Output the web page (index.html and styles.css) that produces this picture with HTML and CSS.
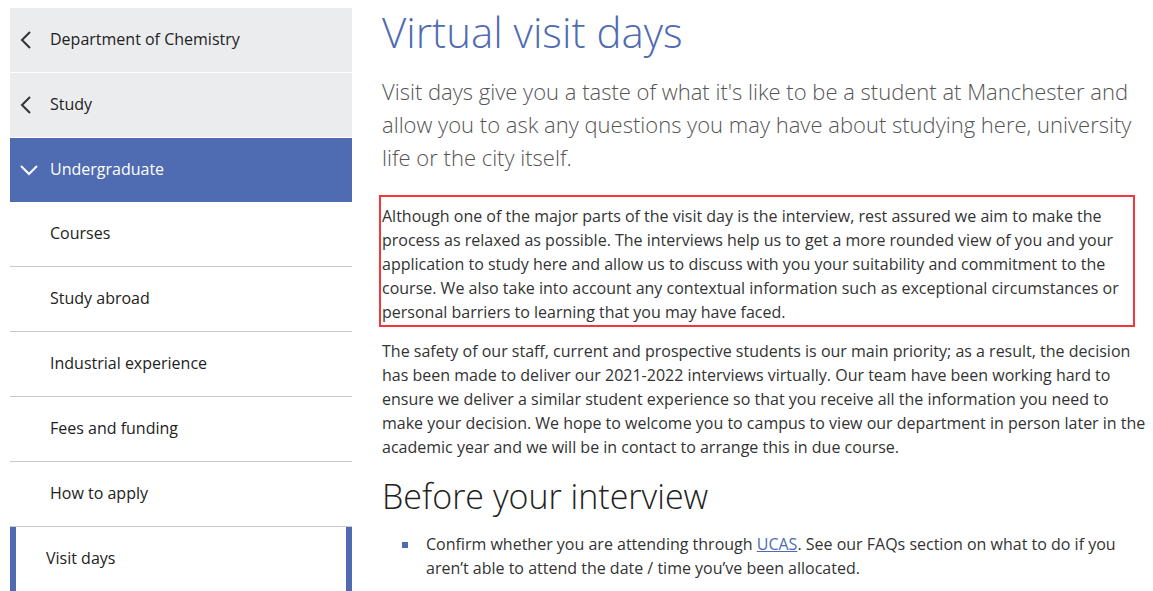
FILE: index.html
```html
<!DOCTYPE html>
<html lang="en">
<head>
<meta charset="utf-8">
<link rel="stylesheet" href="styles.css">
</head>
<body>
<div class="page">
  <nav class="side">
    <a class="item parent"><svg class="chev" width="12" height="18" viewBox="0 0 12 18"><path d="M10 1 L2 9 L10 17" fill="none" stroke="#333" stroke-width="2"/></svg>Department of Chemistry</a>
    <a class="item parent"><svg class="chev" width="12" height="18" viewBox="0 0 12 18"><path d="M10 1 L2 9 L10 17" fill="none" stroke="#333" stroke-width="2"/></svg>Study</a>
    <a class="item current"><svg class="chev down" width="18" height="12" viewBox="0 0 18 12"><path d="M1 2 L9 10 L17 2" fill="none" stroke="#fff" stroke-width="2"/></svg>Undergraduate</a>
    <a class="item child">Courses</a>
    <a class="item child">Study abroad</a>
    <a class="item child">Industrial experience</a>
    <a class="item child">Fees and funding</a>
    <a class="item child">How to apply</a>
    <a class="item child active">Visit days</a>
  </nav>
  <main class="content">
    <h1>Virtual visit days</h1>
    <p class="lead">Visit days give you a taste of what it's like to be a student at Manchester and allow you to ask any questions you may have about studying here, university life or the city itself.</p>
    <p class="boxed">Although one of the major parts of the visit day is the interview, rest assured we aim to make the process as relaxed as possible. The interviews help us to get a more rounded view of you and your application to study here and allow us to discuss with you your suitability and commitment to the course. We also take into account any contextual information such as exceptional circumstances or personal barriers to learning that you may have faced.</p>
    <p class="body">The safety of our staff, current and prospective students is our main priority; as a result, the decision has been made to deliver our 2021-2022 interviews virtually. Our team have been working hard to ensure we deliver a similar student experience so that you receive all the information you need to make your decision. We hope to welcome you to campus to view our department in person later in the academic year and we will be in contact to arrange this in due course.</p>
    <h2>Before your interview</h2>
    <ul class="list">
      <li>Confirm whether you are attending through <a href="#">UCAS</a>. See our FAQs section on what to do if you aren’t able to attend the date / time you’ve been allocated.</li>
    </ul>
  </main>
</div>
</body>
</html>
```
FILE: styles.css
```css
html, body {
  margin: 0;
  padding: 0;
  background: #fff;
}
body {
  font-family: "Open Sans", "Liberation Sans", sans-serif;
  color: #333;
  overflow: hidden;
  height: 591px;
}
.page {
  display: flex;
  padding: 8px 0 0 10px;
  gap: 30px;
}
.side {
  width: 342px;
  flex: none;
  display: flex;
  flex-direction: column;
}
.item {
  display: flex;
  align-items: center;
  height: 64px;
  padding-left: 40px;
  padding-bottom: 3px;
  box-sizing: border-box;
  font-size: 16px;
  color: #222;
  border-bottom: 1px solid #c8c8c8;
  position: relative;
}
.item.parent {
  height: 65px;
  background: #ebecee;
  border-bottom: 1px solid #fff;
}
.item.current {
  background: #4f6bb1;
  color: #fff;
  height: 64px;
  border-bottom: none;
}
.item.child {
  height: 65px;
}
.item.child:last-child {
  border-bottom: none;
}
.chev {
  position: absolute;
  left: 10px;
  top: 23px;
}
.chev.down {
  left: 10px;
  top: 26px;
}
.item.active {
  border-left: 6px solid #4f6bb1;
  border-right: 6px solid #4f6bb1;
  padding-left: 30px;
}
.content {
  width: 770px;
  flex: none;
}
h1 {
  margin: -1px 0 0 0;
  font-weight: 300;
  font-size: 42px;
  line-height: 50px;
  color: #4f6bb1;
}
.lead {
  margin: 18px 0 0 0;
  font-weight: 300;
  font-size: 22px;
  line-height: 33px;
  color: #555;
}
.boxed {
  margin: 21px 0 0 -3px;
  border: 2px solid #f5363a;
  padding: 7px 14px 0 1px;
  width: 737px;
  font-size: 16px;
  line-height: 24px;
  height: 121px;
}
.body {
  margin: 12px 0 0 0;
  font-size: 16px;
  line-height: 24px;
}
h2 {
  margin: 15px 0 0 0;
  font-weight: 300;
  font-size: 34px;
  line-height: 44px;
  color: #222;
}
.list {
  margin: 14px 0 0 0;
  padding: 0 0 0 44px;
  list-style: none;
}
.list li {
  position: relative;
  font-size: 16px;
  line-height: 24px;
}
.list li::before {
  content: "";
  position: absolute;
  left: -24px;
  top: 10px;
  width: 6px;
  height: 6px;
  background: #4f6bb1;
}
.list a {
  color: #4f6bb1;
  text-decoration: underline;
}
```
